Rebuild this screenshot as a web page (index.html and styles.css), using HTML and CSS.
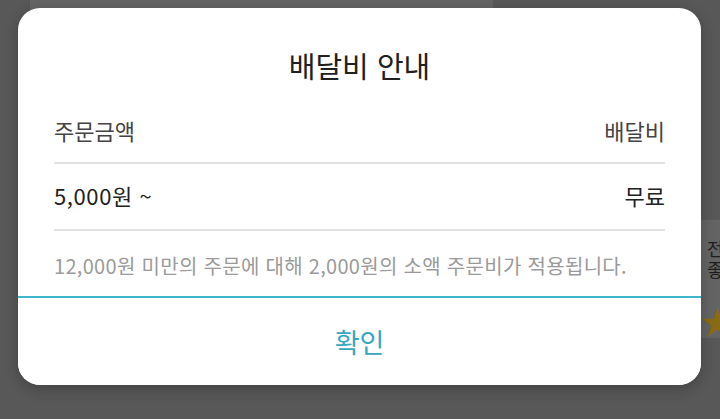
FILE: index.html
```html
<!DOCTYPE html>
<html lang="ko">
<head>
    <meta charset="UTF-8">
    <meta name="viewport" content="width=device-width, initial-scale=1.0">
    <title>배달비 안내</title>
    <link rel="stylesheet" href="styles.css">
</head>
<body>
    <!-- page behind the dim layer -->
    <div class="page">
        <div class="bg-card-top"></div>
        <div class="bg-card-side">
            <div class="side-text">전</div>
            <div class="side-text">좋</div>
            <div class="side-star">★</div>
        </div>
    </div>

    <div class="dim">
        <div class="dialog">
            <h2 class="dialog-title">배달비 안내</h2>
            <div class="fee-table">
                <div class="fee-row fee-head">
                    <span>주문금액</span>
                    <span>배달비</span>
                </div>
                <div class="fee-row">
                    <span class="amount">5,000원 ~</span>
                    <span>무료</span>
                </div>
                <p class="fee-note">12,000원 미만의 주문에 대해 2,000원의 소액 주문비가 적용됩니다.</p>
            </div>
            <button class="btn-ok" type="button">확인</button>
        </div>
    </div>
</body>
</html>
```

FILE: styles.css
```css
body {
    margin: 0;
    width: 720px;
    height: 419px;
    overflow: hidden;
    background: #585858;
    font-family: "Noto Sans CJK KR", "Noto Sans", sans-serif;
    position: relative;
}

.page {
    display: flex;
    align-items: flex-start;
    height: 419px;
}

.bg-card-top {
    margin-left: 30px;
    width: 463px;
    height: 120px;
    background: #646464;
}

.bg-card-side {
    margin-left: 208px;
    margin-top: 219px;
    width: 19px;
    height: 120px;
    padding-top: 18px;
    box-sizing: border-box;
    background: #646464;
    border-top: 1px solid #5a5a5a;
    border-bottom: 1px solid #5a5a5a;
    overflow: hidden;
}

.side-text {
    padding-left: 6px;
    font-size: 18px;
    line-height: 21px;
    height: 21px;
    color: #1e1e1e;
    white-space: nowrap;
}

.side-star {
    margin-top: 24px;
    font-size: 32px;
    line-height: 32px;
    color: #8a6a16;
}

/* dim layer lies over the page */
.dim {
    position: absolute;
    inset: 0;
    padding: 8px 0 0 18px;
}

.dialog {
    width: 683px;
    height: 377px;
    background: #fff;
    border-radius: 22px;
    box-shadow: 0 4px 14px rgba(0, 0, 0, .25);
    display: flex;
    flex-direction: column;
    overflow: hidden;
}

.dialog-title {
    margin: 0;
    padding-top: 38px;
    font-size: 29px;
    font-weight: 400;
    line-height: 38px;
    color: #202020;
    text-align: center;
}

.fee-table {
    padding: 0 36px;
}

.fee-row {
    display: flex;
    justify-content: space-between;
    font-size: 22px;
    line-height: 30px;
    color: #222;
    padding: 16px 0 19px;
    border-bottom: 2px solid #e2e2e2;
}

.fee-row .amount {
    letter-spacing: 0.6px;
}

.fee-head {
    padding: 31px 0 17px;
    color: #444;
}

.fee-note {
    margin: 0;
    padding: 23px 0 18px;
    font-size: 20px;
    letter-spacing: 0.3px;
    line-height: 24px;
    color: #9a9a9a;
}

.btn-ok {
    flex: 1;
    border: 0;
    border-top: 2px solid #3fb6cc;
    background: #fff;
    font-family: inherit;
    font-size: 27px;
    color: #37a6bf;
    padding: 0;
}
```
